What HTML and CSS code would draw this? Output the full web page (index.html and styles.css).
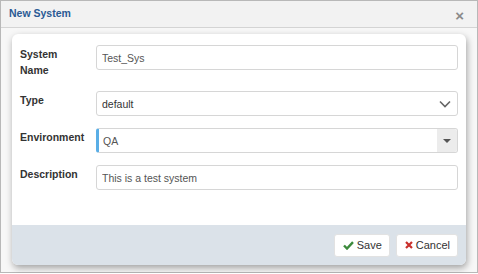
FILE: index.html
```html
<!DOCTYPE html>
<html lang="en">
<head>
  <meta charset="UTF-8" />
  <title>New System</title>
  <link rel="stylesheet" href="styles.css">
</head>
<body>

  <div class="dialog">
    <div class="dialog-header">
      <span class="dialog-title">New System</span>
      <span class="dialog-close">&times;</span>
    </div>

    <div class="dialog-body">
      <div class="card">
        <div class="form">
          <div class="form-row">
            <label class="form-label tall">System<br>Name</label>
            <div class="field">
              <input class="input" type="text" value="Test_Sys" />
            </div>
          </div>

          <div class="form-row">
            <label class="form-label">Type</label>
            <div class="field">
              <div class="input select">
                <span>default</span>
                <svg class="chevron" width="12" height="8" viewBox="0 0 12 8">
                  <path d="M1 1.5 L6 6.5 L11 1.5" fill="none" stroke="#666" stroke-width="1.6" />
                </svg>
              </div>
            </div>
          </div>

          <div class="form-row">
            <label class="form-label">Environment</label>
            <div class="field">
              <div class="input combo">
                <span class="combo-value">QA</span>
                <span class="combo-arrow"></span>
              </div>
            </div>
          </div>

          <div class="form-row">
            <label class="form-label">Description</label>
            <div class="field">
              <input class="input" type="text" value="This is a test system" />
            </div>
          </div>
        </div>

        <div class="card-footer">
          <button class="btn">
            <svg width="11" height="9" viewBox="0 0 11 9">
              <path d="M1 4.5 L4 7.5 L10 1.2" fill="none" stroke="#3c8a3c" stroke-width="2.4" />
            </svg>
            Save
          </button>
          <button class="btn">
            <svg width="8" height="8" viewBox="0 0 8 8">
              <path d="M1 1 L7 7 M7 1 L1 7" fill="none" stroke="#c9302c" stroke-width="2.2" />
            </svg>
            Cancel
          </button>
        </div>
      </div>
    </div>
  </div>

</body>
</html>
```

FILE: styles.css
```css
body {
  font-family: 'Liberation Sans', Arial, sans-serif;
  font-size: 10.5px;
  color: #333;
  background: #fff;
  margin: 0;
  padding: 0;
}

.dialog {
  width: 476px;
  height: 271px;
  border: 1px solid #b8b8b8;
  background: #f7f7f7;
  display: flex;
  flex-direction: column;
}

.dialog-header {
  height: 26px;
  background: #f2f2f2;
  border-bottom: 1px solid #d4d4d4;
  display: flex;
  align-items: center;
  justify-content: space-between;
  padding: 0 13px 0 8px;
}

.dialog-title {
  font-weight: bold;
  color: #2a5a94;
  margin-top: -2px;
}

.dialog-close {
  font-size: 15px;
  font-weight: bold;
  color: #8a8a8a;
  margin-top: 2px;
}

.dialog-body {
  padding: 6px 11px 0 11px;
}

.card {
  background: #fff;
  border-radius: 6px;
  overflow: hidden;
  box-shadow: 1px 3px 7px rgba(0, 0, 0, 0.35);
}

.form {
  padding: 11px 8px 35px 8px;
  display: flex;
  flex-direction: column;
  gap: 12px;
}

.form-row {
  display: flex;
  align-items: flex-start;
}

.form-label {
  width: 76px;
  flex-shrink: 0;
  font-weight: bold;
  line-height: 16px;
  padding-top: 1px;
}

.form-label.tall {
  padding-bottom: 1px;
}

.field {
  flex: 1;
}

.input {
  box-sizing: border-box;
  width: 100%;
  height: 25px;
  border: 1px solid #d6d6d6;
  border-radius: 3px;
  padding: 0 5px;
  font-family: inherit;
  font-size: 10.5px;
  color: #555;
  background: #fff;
  display: flex;
  align-items: center;
}

.select {
  justify-content: space-between;
  color: #333;
  padding-right: 6px;
}

.combo {
  border-left: 3px solid #5aaee6;
  padding: 0 0 0 4px;
  justify-content: space-between;
}

.combo-arrow {
  width: 20px;
  height: 23px;
  background: #ececec;
  border-radius: 0 3px 3px 0;
  position: relative;
}

.combo-arrow::after {
  content: "";
  position: absolute;
  left: 6px;
  top: 10px;
  border-left: 4px solid transparent;
  border-right: 4px solid transparent;
  border-top: 4px solid #555;
}

.card-footer {
  height: 40px;
  background: #dbe2e9;
  display: flex;
  align-items: center;
  justify-content: flex-end;
  gap: 6px;
  padding: 0 8px 0 0;
}

.btn {
  height: 23px;
  background: #fff;
  border: 1px solid #e2e2e2;
  border-radius: 3px;
  padding: 0 7px 0 8px;
  font-family: inherit;
  font-size: 11px;
  color: #333;
  display: flex;
  align-items: center;
  gap: 3px;
}
```
